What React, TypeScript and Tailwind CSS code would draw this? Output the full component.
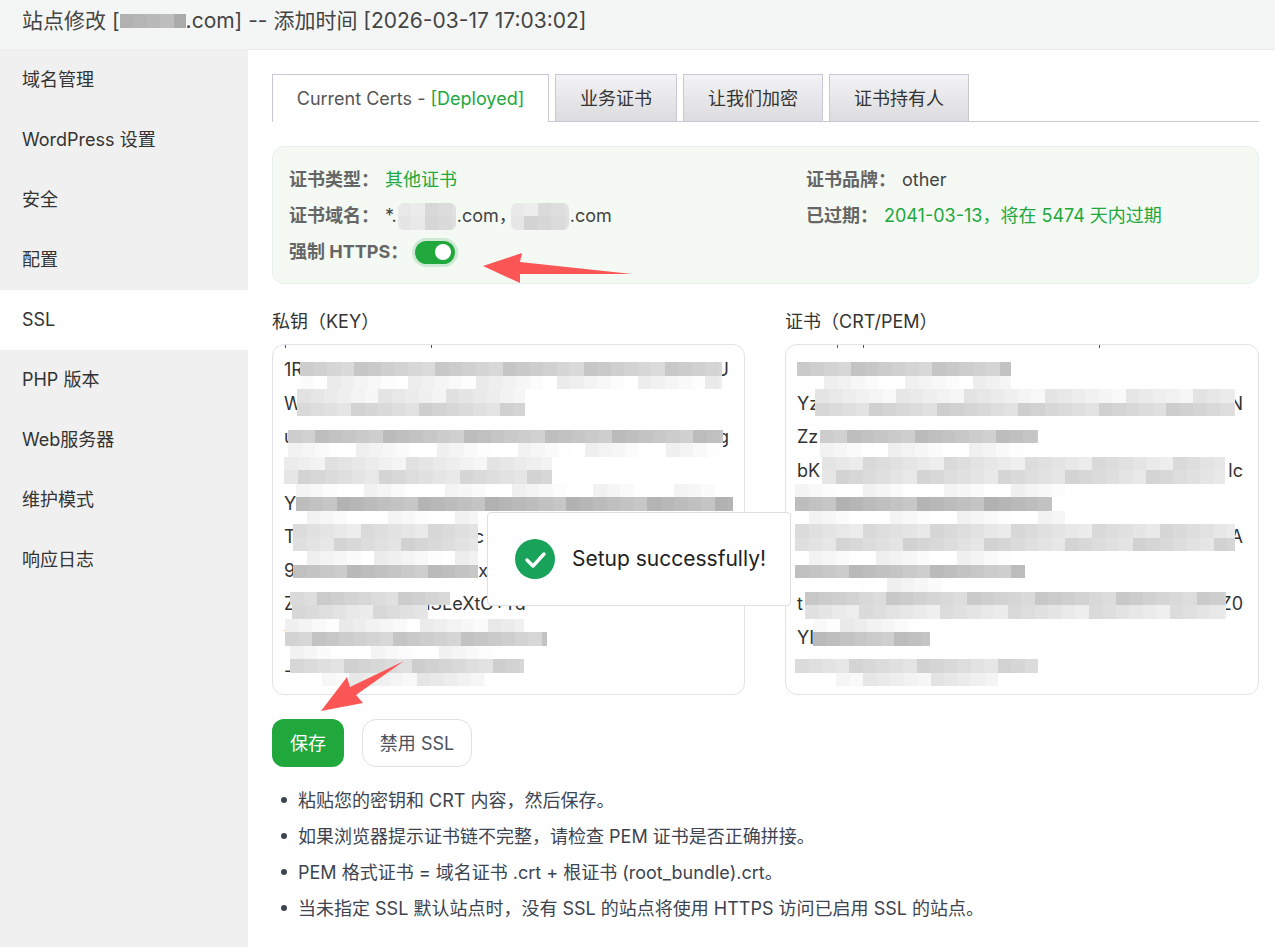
import React from 'react';

const navItems = ['域名管理', 'WordPress 设置', '安全', '配置', 'SSL', 'PHP 版本', 'Web服务器', '维护模式', '响应日志'];
const tabs = ['业务证书', '让我们加密', '证书持有人'];
const tips = [
  '粘贴您的密钥和 CRT 内容，然后保存。',
  '如果浏览器提示证书链不完整，请检查 PEM 证书是否正确拼接。',
  'PEM 格式证书 = 域名证书 .crt + 根证书 (root_bundle).crt。',
  '当未指定 SSL 默认站点时，没有 SSL 的站点将使用 HTTPS 访问已启用 SSL 的站点。',
];

type Line = { l?: string; r?: string; mid?: string; gap?: number };
type Patch = [number, number, number, number];

const keyLines: Line[] = [
  {},
  { l: '1R', r: 'U' },
  { l: 'W' },
  { l: 'u', r: 'g' },
  {},
  { l: 'Y' },
  { l: 'T', mid: 'c', gap: 178 },
  { l: '9', mid: 'x', gap: 183 },
  { l: 'Z', mid: 'aSLeXtC+Yd', gap: 125 },
  { l: 'Y' },
  { l: '-' },
];

const certLines: Line[] = [
  {},
  {},
  { l: 'Yz', r: 'N' },
  { l: 'Zz' },
  { l: 'bK', r: 'lc' },
  { mid: 'g', gap: 232 },
  { l: 'x0Cu', r: 'A' },
  {},
  { l: 't', r: 'Z0' },
  { l: 'YI' },
  {},
];

// x on the page, pixel row, width, base grey
const keyPatches: Patch[] = [
  [300, 0, 422, 208], [300, 1, 422, 245], [297, 2, 228, 236], [297, 3, 228, 218],
  [288, 5, 435, 198], [288, 6, 435, 250], [284, 7, 268, 235], [284, 8, 268, 222],
  [296, 9, 437, 251], [296, 10, 437, 188], [293, 11, 185, 252], [293, 12, 185, 226],
  [293, 13, 185, 220], [293, 14, 185, 247], [293, 15, 185, 196], [290, 17, 160, 214],
  [292, 18, 136, 226], [285, 19, 239, 243], [285, 20, 262, 205], [290, 21, 230, 252],
  [290, 22, 234, 216], [322, 23, 163, 240],
];

const certPatches: Patch[] = [
  [797, 0, 214, 205], [797, 1, 214, 248], [815, 2, 420, 238], [815, 3, 420, 216],
  [820, 5, 218, 198], [820, 6, 218, 250], [822, 7, 403, 228], [822, 8, 403, 222],
  [795, 9, 270, 251], [795, 10, 257, 188], [795, 11, 270, 252], [795, 12, 440, 225],
  [795, 13, 440, 220], [795, 14, 215, 250], [795, 15, 230, 196], [860, 16, 85, 250],
  [805, 17, 421, 210], [805, 18, 421, 228], [813, 19, 104, 243], [813, 20, 117, 196],
  [795, 22, 243, 220], [836, 23, 162, 238],
];

const grey = (base: number, i: number, seed: number) => {
  const n = ((i * 37 + seed * 91) % 17) - 8;
  return Math.round(Math.min(255, base + n * 1.4));
};

const Cells: React.FC<{ count: number; base: number; seed: number }> = ({ count, base, seed }) => (
  <>
    {Array.from({ length: count }).map((_, i) => {
      const g = grey(base, i, seed);
      return <div key={i} className="h-full w-[13.5px] shrink-0" style={{ background: `rgb(${g},${g},${g})` }} />;
    })}
  </>
);

const Mosaic: React.FC<{ patches: Patch[]; originX: number }> = ({ patches, originX }) => (
  <>
    {patches.map(([x, row, w, base], i) => (
      <div
        key={i}
        className="absolute flex h-[13.5px] overflow-hidden"
        style={{ left: x - originX, top: 17 + row * 13.5, width: w }}
      >
        <Cells count={Math.ceil(w / 13.5)} base={base} seed={i + 1} />
      </div>
    ))}
  </>
);

const InlineBlur: React.FC<{ seed: number; className?: string }> = ({ seed, className = '' }) => (
  <span className={`mx-[1px] flex h-[27px] w-[58px] flex-col overflow-hidden rounded-md ${className}`}>
    <span className="flex h-[13.5px]"><Cells count={5} base={226} seed={seed} /></span>
    <span className="flex h-[13.5px]"><Cells count={5} base={222} seed={seed + 3} /></span>
  </span>
);

const KeyBox: React.FC<{ title: string; lines: Line[]; patches: Patch[]; originX: number; width: string; ticks: string[] }> = ({ title, lines, patches, originX, width, ticks }) => (
  <div className={`flex flex-col ${width}`}>
    <div className="mb-[10px] mt-[2px] h-[24px] leading-[24px] text-[#333]">{title}</div>
    <div className="relative h-[351px] overflow-hidden rounded-xl border border-[#e2e2ea] bg-white">
      <div className="-mt-[25px] pl-[11px] pr-[15px] text-[#333]">
        {lines.map((line, i) => (
          <div key={i} className="flex h-[33.4px] items-center justify-between leading-[33.4px]">
            <span className="flex">
              <span>{line.l}</span>
              {line.mid && <span style={{ marginLeft: line.gap }}>{line.mid}</span>}
            </span>
            <span>{line.r}</span>
          </div>
        ))}
      </div>
      {ticks.map((tick) => (
        <span key={tick} className={`absolute top-0 h-[3px] w-[1px] bg-[#555] ${tick}`} />
      ))}
      <Mosaic patches={patches} originX={originX} />
    </div>
  </div>
);

export default function App() {
  return (
    <div className="relative min-h-[947px] overflow-hidden bg-white font-[Inter,'Noto_Sans_CJK_SC',sans-serif] text-[18px] text-[#333]">
      <header className="flex h-[50px] items-center border-b border-[#eceeed] bg-[#f4f6f5] pb-[8px] pl-[22px] text-[21px] text-[#444]">
        <span className="whitespace-pre">站点修改 [</span>
        <span className="flex h-[14px] w-[66px] shrink-0 overflow-hidden"><Cells count={5} base={178} seed={4} /></span>
        <span className="whitespace-pre">.com] -- 添加时间 [2026-03-17 17:03:02]</span>
      </header>

      <div className="flex min-h-[897px]">
        <aside className="w-[248px] shrink-0 bg-[#f0f0f0]">
          {navItems.map((item) => (
            <div key={item} className={`flex h-[60px] items-center pb-[1px] pl-[22px] text-[#333] ${item === 'SSL' ? 'bg-white' : ''}`}>
              {item}
            </div>
          ))}
        </aside>

        <main className="w-[1027px] pl-[24px] pr-[16px] pt-[24px]">
          <div className="flex h-[48px] gap-[6px] border-b border-[#c9c9d6]">
            <div className="-mb-px flex h-[48px] w-[277px] items-center justify-center border border-b-0 border-[#c9c9d6] bg-white text-[#555]">
              Current Certs -&nbsp;<span className="text-[#21a83d]">[Deployed]</span>
            </div>
            {tabs.map((tab) => (
              <div
                key={tab}
                className={`flex h-[47px] items-center justify-center border border-b-0 border-[#c9c9d6] bg-gradient-to-b from-[#f3f3f5] to-[#dcdcde] text-[#333] ${tab === '业务证书' ? 'w-[122px]' : 'w-[140px]'}`}
              >
                {tab}
              </div>
            ))}
          </div>

          <section className="mt-[24px] flex h-[138px] rounded-xl border border-[#e6f0ec] bg-[#f4f9f3] pl-[16px] pt-[15px] leading-[36px]">
            <div className="w-[517px]">
              <div className="flex h-[36px] items-center">
                <b className="w-[96px] font-bold text-[#666]">证书类型：</b>
                <span className="text-[#21a83d]">其他证书</span>
              </div>
              <div className="flex h-[36px] items-center">
                <b className="w-[96px] font-bold text-[#666]">证书域名：</b>
                <span className="flex items-center whitespace-pre text-[#444]">*.<InlineBlur seed={2} />.com，<InlineBlur seed={5} className="-ml-[6px]" />.com</span>
              </div>
              <div className="flex h-[36px] items-center">
                <b className="whitespace-pre font-bold text-[#666]">强制 HTTPS：</b>
                <span className="ml-[7px] flex h-[23px] w-[40px] items-center justify-end rounded-full bg-[#21a83d] pr-[4px] ring-[3px] ring-[#cde8d3]">
                  <span className="h-[16px] w-[16px] rounded-full bg-white" />
                </span>
              </div>
            </div>
            <div>
              <div className="flex h-[36px] items-center">
                <b className="w-[96px] font-bold text-[#666]">证书品牌：</b>
                <span className="text-[#444]">other</span>
              </div>
              <div className="flex h-[36px] items-center">
                <b className="w-[78px] font-bold text-[#666]">已过期：</b>
                <span className="text-[#21a83d]">2041-03-13，将在 5474 天内过期</span>
              </div>
            </div>
          </section>

          <div className="mt-[24px] flex gap-[40px]">
            <KeyBox title="私钥（KEY）" lines={keyLines} patches={keyPatches} originX={273} width="w-[473px]" ticks={['left-[12px]', 'left-[158px]']} />
            <KeyBox title="证书（CRT/PEM）" lines={certLines} patches={certPatches} originX={786} width="w-[474px]" ticks={['left-[51px]', 'left-[77px]', 'left-[313px]']} />
          </div>

          <div className="mt-[24px] flex gap-[18px]">
            <button className="h-[48px] w-[72px] rounded-xl bg-[#21a83d] text-white">保存</button>
            <button className="h-[48px] w-[110px] rounded-[14px] border border-[#e0e0e6] bg-white text-[#4a5160]">禁用 SSL</button>
          </div>

          <ul className="mt-[15px] pl-[26px] text-[#3d4450]">
            {tips.map((tip) => (
              <li key={tip} className="relative flex h-[36px] items-center whitespace-pre">
                <span className="absolute -left-[17px] h-[6px] w-[6px] rounded-full bg-[#3d4450]" />
                {tip}
              </li>
            ))}
          </ul>
        </main>
      </div>

      <div className="absolute left-[487px] top-[512px] flex h-[94px] w-[304px] items-center rounded border border-[#dcdfe6] bg-white pl-[27px] text-[21px] text-[#222]">
        <svg width="40" height="40" viewBox="0 0 40 40" className="shrink-0">
          <circle cx="20" cy="20" r="20" fill="#19a35a" />
          <path d="M12 21l6 6 11-12" fill="none" stroke="#fff" strokeWidth="3.4" strokeLinecap="round" strokeLinejoin="round" />
        </svg>
        <span className="ml-[17px] whitespace-nowrap">Setup successfully!</span>
      </div>

      <svg className="pointer-events-none absolute left-0 top-0" width="1275" height="947">
        <polygon points="483,266 522,253 520,262 632,274 520,274 520,283" fill="#fc5555" />
        <polygon points="321,711 347,677 350,687 404,661 356,695 363,703" fill="#fc5555" />
      </svg>
    </div>
  );
}
